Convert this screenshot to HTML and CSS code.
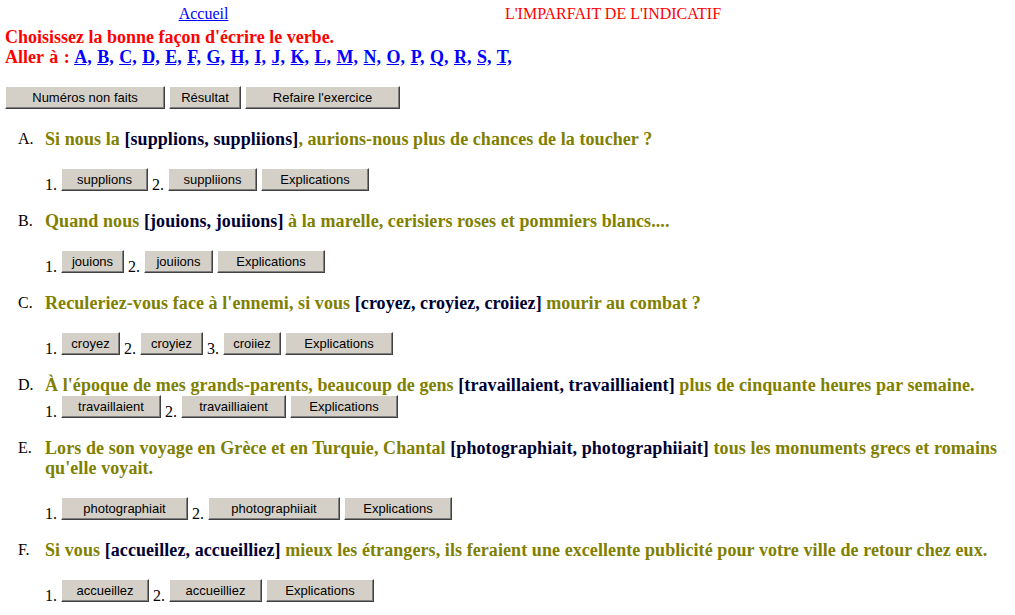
FILE: index.html
```html
<!DOCTYPE html>
<html lang="fr">
<head>
<meta charset="utf-8">
<title>L'imparfait de l'indicatif</title>
<link rel="stylesheet" href="styles.css">
</head>
<body>
<div class="header">
  <div class="cell"><a href="#">Accueil</a></div>
  <div class="cell title">L'IMPARFAIT DE L'INDICATIF</div>
</div>
<div class="intro">Choisissez la bonne façon d'écrire le verbe.</div>
<div class="intro goto">Aller à : <a href="#A">A,</a> <a href="#B">B,</a> <a href="#C">C,</a> <a href="#D">D,</a> <a href="#E">E,</a> <a href="#F">F,</a> <a href="#G">G,</a> <a href="#H">H,</a> <a href="#I">I,</a> <a href="#J">J,</a> <a href="#K">K,</a> <a href="#L">L,</a> <a href="#M">M,</a> <a href="#N">N,</a> <a href="#O">O,</a> <a href="#P">P,</a> <a href="#Q">Q,</a> <a href="#R">R,</a> <a href="#S">S,</a> <a href="#T">T,</a></div>

<div class="toolbar">
  <button class="btn w160">Numéros non faits</button>
  <button class="btn w72">Résultat</button>
  <button class="btn w155">Refaire l'exercice</button>
</div>

<div class="questions">
  <div class="item">
    <div class="marker">A.</div>
    <div class="body">
      <div class="q">Si nous la <span class="v">[supplions, suppliions]</span>, aurions-nous plus de chances de la toucher ?</div>
      <div class="answers">
        <span class="num">1.</span><button class="btn w87">supplions</button>
        <span class="num">2.</span><button class="btn w89">suppliions</button>
        <button class="btn w108">Explications</button>
      </div>
    </div>
  </div>
  <div class="item">
    <div class="marker">B.</div>
    <div class="body">
      <div class="q">Quand nous <span class="v">[jouions, jouiions]</span> à la marelle, cerisiers roses et pommiers blancs....</div>
      <div class="answers">
        <span class="num">1.</span><button class="btn w63">jouions</button>
        <span class="num">2.</span><button class="btn w69">jouiions</button>
        <button class="btn w108">Explications</button>
      </div>
    </div>
  </div>
  <div class="item">
    <div class="marker">C.</div>
    <div class="body">
      <div class="q">Reculeriez-vous face à l'ennemi, si vous <span class="v">[croyez, croyiez, croiiez]</span> mourir au combat ?</div>
      <div class="answers">
        <span class="num">1.</span><button class="btn w59">croyez</button>
        <span class="num">2.</span><button class="btn w63">croyiez</button>
        <span class="num">3.</span><button class="btn w58">croiiez</button>
        <button class="btn w108">Explications</button>
      </div>
    </div>
  </div>
  <div class="item">
    <div class="marker">D.</div>
    <div class="body">
      <div class="q">À l'époque de mes grands-parents, beaucoup de gens <span class="v">[travaillaient, travailliaient]</span> plus de cinquante heures par semaine.</div>
      <div class="answers tight">
        <span class="num">1.</span><button class="btn w100">travaillaient</button>
        <span class="num">2.</span><button class="btn w105">travailliaient</button>
        <button class="btn w108">Explications</button>
      </div>
    </div>
  </div>
  <div class="item">
    <div class="marker">E.</div>
    <div class="body">
      <div class="q">Lors de son voyage en Grèce et en Turquie, Chantal <span class="v">[photographiait, photographiiait]</span> tous les monuments grecs et romains qu'elle voyait.</div>
      <div class="answers">
        <span class="num">1.</span><button class="btn w127">photographiait</button>
        <span class="num">2.</span><button class="btn w132">photographiiait</button>
        <button class="btn w108">Explications</button>
      </div>
    </div>
  </div>
  <div class="item">
    <div class="marker">F.</div>
    <div class="body">
      <div class="q">Si vous <span class="v">[accueillez, accueilliez]</span> mieux les étrangers, ils feraient une excellente publicité pour votre ville de retour chez eux.</div>
      <div class="answers">
        <span class="num">1.</span><button class="btn w88">accueillez</button>
        <span class="num">2.</span><button class="btn w93">accueilliez</button>
        <button class="btn w108">Explications</button>
      </div>
    </div>
  </div>
</div>
</body>
</html>
```

FILE: styles.css
```css
html, body {
  background: #ffffff;
}
body {
  margin: 5px;
  font-family: "Liberation Serif", "Times New Roman", serif;
  font-size: 16px;
  color: #000000;
}
a {
  color: #0000ff;
}
.header {
  display: grid;
  grid-template-columns: 397px 422px;
  height: 22px;
  line-height: 18px;
}
.cell {
  text-align: center;
}
.title {
  color: #ff0000;
}
.intro {
  color: #ff0000;
  font-weight: bold;
  font-size: 18px;
  line-height: 20px;
}
.intro a {
  color: #0000ff;
}
.goto {
  word-spacing: 1px;
}
.toolbar {
  display: flex;
  gap: 4px;
  margin-top: 19px;
}
.btn {
  box-sizing: border-box;
  height: 23px;
  padding: 0;
  margin: 0;
  font-family: "Liberation Sans", Arial, sans-serif;
  font-size: 13px;
  line-height: 15px;
  color: #000000;
  background: #d4d0c8;
  border: 1px solid;
  border-color: #ffffff #404040 #404040 #ffffff;
  box-shadow: inset -1px -1px 0 #808080, inset 1px 1px 0 #d4d0c8;
  text-align: center;
  border-radius: 0;
}
.w58 { width: 58px; }
.w59 { width: 59px; }
.w63 { width: 63px; }
.w69 { width: 69px; }
.w72 { width: 72px; }
.w87 { width: 87px; }
.w88 { width: 88px; }
.w89 { width: 89px; }
.w93 { width: 93px; }
.w100 { width: 100px; }
.w105 { width: 105px; }
.w108 { width: 108px; }
.w127 { width: 127px; }
.w132 { width: 132px; }
.w155 { width: 155px; }
.w160 { width: 160px; }
.questions {
  margin-top: 20px;
}
.item {
  display: flex;
  margin-bottom: 20px;
}
.marker {
  flex: 0 0 40px;
  box-sizing: border-box;
  padding-left: 13px;
  text-align: left;
  line-height: 20px;
}
.body {
  flex: 1;
}
.q {
  color: #808000;
  font-weight: bold;
  font-size: 18px;
  letter-spacing: 0.08px;
  line-height: 20px;
}
.v {
  color: #000033;
}
.answers {
  display: flex;
  align-items: flex-end;
  gap: 4px;
  margin-top: 19px;
}
.answers.tight {
  margin-top: 0;
}
.num {
  line-height: 16px;
  margin-bottom: -2px;
}
```
